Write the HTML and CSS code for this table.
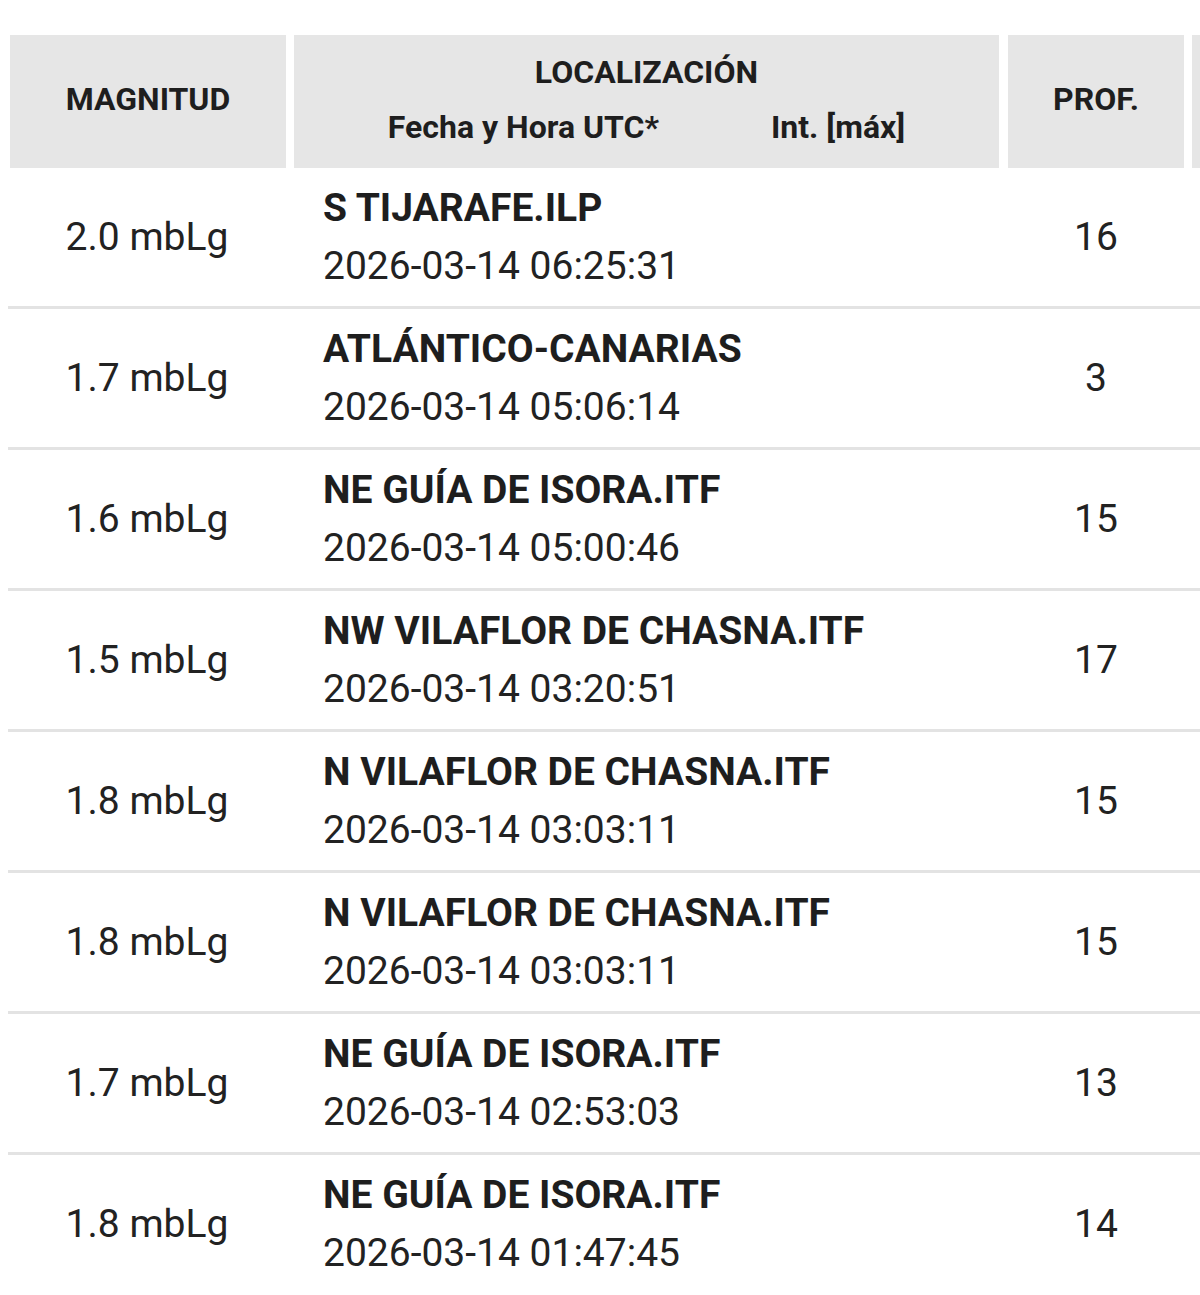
FILE: index.html
```html
<!DOCTYPE html>
<html lang="es">
<head>
<meta charset="utf-8">
<title>Terremotos</title>
<link rel="stylesheet" href="styles.css">
</head>
<body>
<div class="table">
  <div class="head">
    <div class="th c-mag">MAGNITUD</div>
    <div class="th c-loc">
      <div>LOCALIZACIÓN</div>
      <div class="sub"><span>Fecha y Hora UTC*</span><span>Int. [máx]</span></div>
    </div>
    <div class="th c-prof">PROF.</div>
    <div class="th c-more"></div>
  </div>
  <div class="rows">
    <div class="row"><div class="c-mag">2.0 mbLg</div><div class="c-loc"><div class="place">S TIJARAFE.ILP</div><div>2026-03-14 06:25:31</div></div><div class="c-prof">16</div></div>
    <div class="row"><div class="c-mag">1.7 mbLg</div><div class="c-loc"><div class="place">ATLÁNTICO-CANARIAS</div><div>2026-03-14 05:06:14</div></div><div class="c-prof">3</div></div>
    <div class="row"><div class="c-mag">1.6 mbLg</div><div class="c-loc"><div class="place">NE GUÍA DE ISORA.ITF</div><div>2026-03-14 05:00:46</div></div><div class="c-prof">15</div></div>
    <div class="row"><div class="c-mag">1.5 mbLg</div><div class="c-loc"><div class="place">NW VILAFLOR DE CHASNA.ITF</div><div>2026-03-14 03:20:51</div></div><div class="c-prof">17</div></div>
    <div class="row"><div class="c-mag">1.8 mbLg</div><div class="c-loc"><div class="place">N VILAFLOR DE CHASNA.ITF</div><div>2026-03-14 03:03:11</div></div><div class="c-prof">15</div></div>
    <div class="row"><div class="c-mag">1.8 mbLg</div><div class="c-loc"><div class="place">N VILAFLOR DE CHASNA.ITF</div><div>2026-03-14 03:03:11</div></div><div class="c-prof">15</div></div>
    <div class="row"><div class="c-mag">1.7 mbLg</div><div class="c-loc"><div class="place">NE GUÍA DE ISORA.ITF</div><div>2026-03-14 02:53:03</div></div><div class="c-prof">13</div></div>
    <div class="row last"><div class="c-mag">1.8 mbLg</div><div class="c-loc"><div class="place">NE GUÍA DE ISORA.ITF</div><div>2026-03-14 01:47:45</div></div><div class="c-prof">14</div></div>
  </div>
</div>
</body>
</html>
```
FILE: styles.css
```css
html, body {
  margin: 0;
  padding: 0;
  background: #ffffff;
  overflow: hidden;
}
body {
  width: 1200px;
  height: 1295px;
  font-family: Roboto, "Liberation Sans", Arial, sans-serif;
  color: #222222;
}
.table {
  padding-top: 35px;
  width: 1200px;
  overflow: hidden;
}
.head {
  display: flex;
  gap: 8px;
  padding-left: 10px;
  height: 133px;
}
.th {
  flex-shrink: 0;
  background: #e6e6e6;
  font-weight: 700;
  font-size: 32px;
  display: flex;
  flex-direction: column;
  align-items: center;
  justify-content: center;
  line-height: 55px;
  padding-bottom: 4px;
  box-sizing: border-box;
  color: #1e1e1e;
}
.head .c-mag { width: 276px; }
.head .c-loc { width: 705px; }
.head .c-prof { width: 176px; margin-left: 1px; }
.head .c-more { width: 300px; }
.sub {
  display: flex;
  gap: 112px;
}
.rows {
  margin-left: 8px;
  width: 1192px;
}
.row {
  display: flex;
  height: 138px;
  border-bottom: 3px solid #e3e3e3;
  font-size: 39px;
  align-items: center;
}
.row.last { border-bottom: none; }
.row .c-mag {
  width: 278px;
  text-align: center;
}
.row .c-loc {
  width: 705px;
  margin-left: 8px;
  padding-left: 29px;
  box-sizing: border-box;
  line-height: 58px;
}
.place {
  font-weight: 700;
  color: #1e1e1e;
}
.row .c-prof {
  width: 176px;
  margin-left: 9px;
  text-align: center;
}
```
